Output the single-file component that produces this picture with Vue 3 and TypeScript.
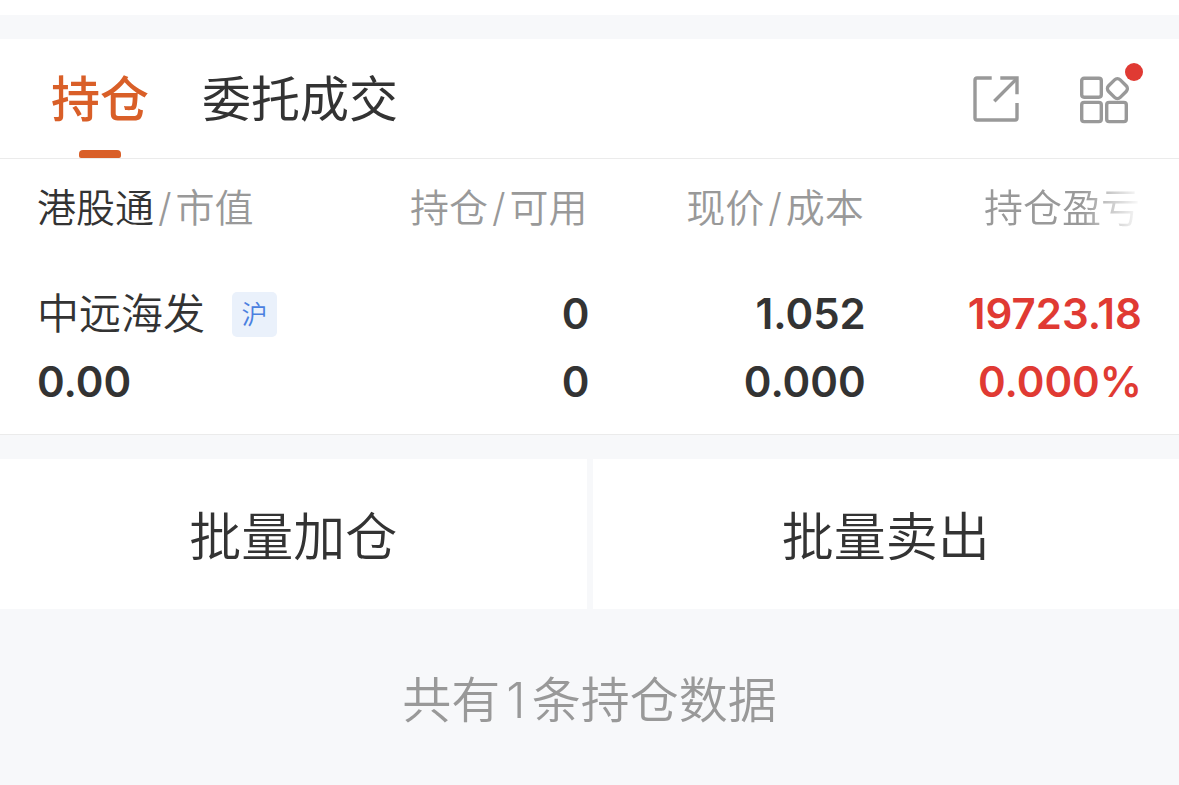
<script setup lang="ts">
import { ref } from 'vue'

interface Column {
  lead: string
  rest?: string
  strong?: boolean
  faded?: boolean
}

interface Holding {
  name: string
  market: string
  value: string
  held: string
  available: string
  price: string
  cost: string
  profit: string
  profitRate: string
}

const tabs: string[] = ['持仓', '委托成交']
const activeTab = ref<string>('持仓')

const columns: Column[] = [
  { lead: '港股通', rest: '市值', strong: true },
  { lead: '持仓', rest: '可用' },
  { lead: '现价', rest: '成本' },
  { lead: '持仓盈亏', faded: true },
]

const holdings: Holding[] = [
  {
    name: '中远海发',
    market: '沪',
    value: '0.00',
    held: '0',
    available: '0',
    price: '1.052',
    cost: '0.000',
    profit: '19723.18',
    profitRate: '0.000%',
  },
]

const actions: string[] = ['批量加仓', '批量卖出']
</script>

<template>
  <main class="page">
    <header class="bar">
      <nav class="tabs">
        <button
          v-for="tab in tabs"
          :key="tab"
          type="button"
          class="tab"
          :class="{ active: tab === activeTab }"
          @click="activeTab = tab"
        >
          {{ tab }}
        </button>
      </nav>
      <div class="tools">
        <button type="button" class="tool" aria-label="分享">
          <svg width="48" height="48" viewBox="0 0 48 48" fill="none" stroke="#999" stroke-width="3.4">
            <path d="M19.7 3H5Q3 3 3 5V43Q3 45 5 45H43Q45 45 45 43V28" />
            <path d="M28.3 3H45V19.3" />
            <path d="M22.3 26.3L45 3.4" />
          </svg>
        </button>
        <button type="button" class="tool" aria-label="更多功能">
          <svg width="50" height="50" viewBox="0 0 50 50" fill="none" stroke="#999" stroke-width="3.4">
            <rect x="2.7" y="4.2" width="19.6" height="19" rx="2.4" />
            <rect x="2.7" y="28.4" width="19.6" height="19.2" rx="2.4" />
            <rect x="27.7" y="28.4" width="19.6" height="19.2" rx="2.4" />
            <rect x="30.2" y="6.4" width="16.4" height="16.4" rx="4" transform="rotate(45 38.4 14.6)" />
          </svg>
          <span class="dot"></span>
        </button>
      </div>
    </header>

    <section class="holdings">
      <table>
        <thead>
          <tr>
            <th v-for="col in columns" :key="col.lead" scope="col" :class="{ faded: col.faded }">
              <span :class="{ strong: col.strong }">{{ col.lead }}</span>
              <template v-if="col.rest"><span class="slash">/</span>{{ col.rest }}</template>
            </th>
          </tr>
        </thead>
        <tbody>
          <tr v-for="item in holdings" :key="item.name">
            <td>
              <div class="line name">{{ item.name }}<span class="tag">{{ item.market }}</span></div>
              <div class="line">{{ item.value }}</div>
            </td>
            <td>
              <div class="line">{{ item.held }}</div>
              <div class="line">{{ item.available }}</div>
            </td>
            <td>
              <div class="line">{{ item.price }}</div>
              <div class="line">{{ item.cost }}</div>
            </td>
            <td class="gain">
              <div class="line">{{ item.profit }}</div>
              <div class="line">{{ item.profitRate }}</div>
            </td>
          </tr>
        </tbody>
      </table>
    </section>

    <div class="actions">
      <button v-for="action in actions" :key="action" type="button" class="action">{{ action }}</button>
    </div>

    <p class="summary">共有<span class="count">{{ holdings.length }}</span>条持仓数据</p>
  </main>
</template>

<style>
body {
  margin: 0;
  background: #f7f8fa;
}
</style>

<style scoped>
.page {
  border-top: 15px solid #fff;
  padding-top: 24px;
  background: #f7f8fa;
  color: #333;
  font-family: Inter, "Noto Sans CJK SC", sans-serif;
  font-weight: 350;
}

button {
  margin: 0;
  padding: 0;
  border: 0;
  background: none;
  color: inherit;
  font: inherit;
  cursor: pointer;
}

.bar {
  display: flex;
  justify-content: space-between;
  align-items: center;
  height: 119px;
  padding: 0 50px 0 51px;
  border-bottom: 1px solid #ebebeb;
  background: #fff;
}

.tabs {
  display: flex;
  align-self: stretch;
  gap: 53px;
}

.tab {
  position: relative;
  padding-top: 3px;
  font-size: 49px;
  font-weight: 400;
  line-height: 116px;
}

.tab.active {
  color: #d95f28;
  font-weight: 500;
}

.tab.active::after {
  content: "";
  position: absolute;
  bottom: 0;
  left: 50%;
  width: 42px;
  height: 8px;
  margin-left: -21px;
  border-radius: 4px 4px 2px 2px;
  background: #d95f28;
}

.tools {
  display: flex;
  gap: 59px;
}

.tool {
  position: relative;
  display: flex;
  align-items: center;
}

.tool svg {
  display: block;
}

.dot {
  position: absolute;
  top: -11px;
  right: -14px;
  width: 18px;
  height: 18px;
  border-radius: 50%;
  background: #e03a33;
}

.holdings {
  padding: 0 37px 18px;
  border-bottom: 1px solid #ebebeb;
  background: #fff;
}

table {
  width: 100%;
  border-collapse: collapse;
  table-layout: fixed;
}

th,
td {
  padding: 0;
  text-align: right;
  white-space: nowrap;
}

th:first-child,
td:first-child {
  text-align: left;
}

th {
  padding-right: 2px;
  color: #999;
  font-size: 39px;
  font-weight: 350;
  line-height: 98px;
}

.strong {
  color: #333;
}

.slash {
  margin: 0 4px;
}

.faded {
  -webkit-mask-image: linear-gradient(to left, transparent, #000 60px);
  mask-image: linear-gradient(to left, transparent, #000 60px);
}

td {
  padding-top: 23px;
  font-size: 42px;
  font-weight: 600;
}

.line {
  height: 68px;
  line-height: 68px;
}

.name {
  display: flex;
  align-items: center;
  gap: 27px;
  font-weight: 350;
}

.tag {
  width: 45px;
  height: 45px;
  border-radius: 5px;
  background: #eaf1fb;
  color: #4a80e0;
  font-size: 26px;
  line-height: 45px;
  text-align: center;
}

.gain {
  color: #e03a33;
}

.actions {
  display: grid;
  grid-template-columns: 1fr 1fr;
  gap: 6px;
  margin-top: 24px;
}

.action {
  padding-top: 8px;
  background: #fff;
  font-size: 52px;
  line-height: 142px;
}

.summary {
  margin: 0;
  padding-top: 8px;
  color: #999;
  font-size: 49px;
  line-height: 168px;
  text-align: center;
}

.count {
  margin: 0 6px;
}
</style>
